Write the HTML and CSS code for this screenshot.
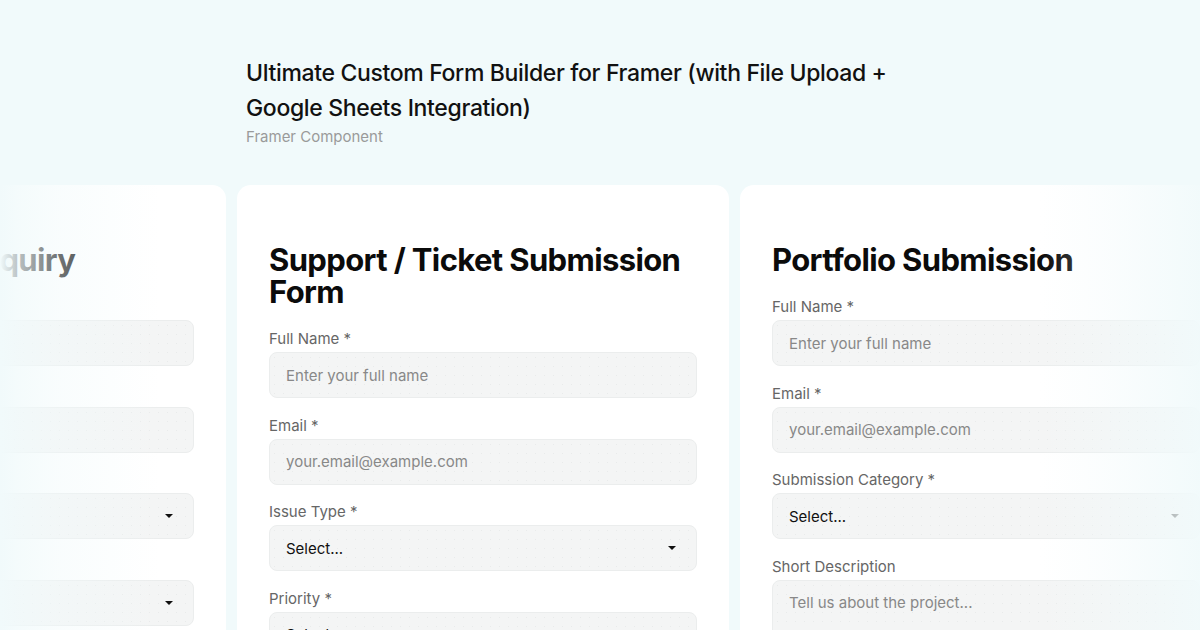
FILE: index.html
```html
<!DOCTYPE html>
<html lang="en">
<head>
<meta charset="utf-8">
<title>Ultimate Custom Form Builder for Framer</title>
<link rel="stylesheet" href="styles.css">
</head>
<body>
<div class="page">
  <header class="intro">
    <h1 class="intro-title">Ultimate Custom Form Builder for Framer (with File Upload + Google Sheets Integration)</h1>
    <p class="intro-sub">Framer Component</p>
  </header>

  <div class="cards">
    <section class="card">
      <h2 class="card-title">General Sales Inquiry</h2>
      <div class="field"><label class="label">Full Name *</label><div class="input placeholder">Enter your full name</div></div>
      <div class="field"><label class="label">Email *</label><div class="input placeholder">your.email@example.com</div></div>
      <div class="field"><label class="label">Inquiry Type *</label><div class="input select">Select...<span class="caret"></span></div></div>
      <div class="field"><label class="label">Budget *</label><div class="input select">Select...<span class="caret"></span></div></div>
    </section>

    <section class="card">
      <h2 class="card-title">Support / Ticket Submission Form</h2>
      <div class="field"><label class="label">Full Name *</label><div class="input placeholder">Enter your full name</div></div>
      <div class="field"><label class="label">Email *</label><div class="input placeholder">your.email@example.com</div></div>
      <div class="field"><label class="label">Issue Type *</label><div class="input select">Select...<span class="caret"></span></div></div>
      <div class="field"><label class="label">Priority *</label><div class="input select">Select...<span class="caret"></span></div></div>
    </section>

    <section class="card">
      <h2 class="card-title">Portfolio Submission</h2>
      <div class="field"><label class="label">Full Name *</label><div class="input placeholder">Enter your full name</div></div>
      <div class="field"><label class="label">Email *</label><div class="input placeholder">your.email@example.com</div></div>
      <div class="field"><label class="label">Submission Category *</label><div class="input select">Select...<span class="caret"></span></div></div>
      <div class="field"><label class="label">Short Description</label><div class="input textarea placeholder">Tell us about the project...</div></div>
    </section>
  </div>

  <div class="fade fade-left"></div>
  <div class="fade fade-right"></div>
</div>
</body>
</html>
```

FILE: styles.css
```css
* { box-sizing: border-box; }

html, body {
  margin: 0;
  padding: 0;
}

body {
  background: #f1fafb;
  font-family: Inter, "Noto Sans", sans-serif;
  color: #111;
}

.page {
  position: relative;
  width: 1200px;
  height: 630px;
  overflow: hidden;
}

.intro {
  padding: 56px 0 0 246px;
}

.intro-title {
  margin: 0;
  width: 660px;
  font-family: Inter, sans-serif;
  font-size: 23px;
  font-weight: 500;
  line-height: 35px;
  letter-spacing: -0.015em;
  color: #111;
}

.intro-sub {
  margin: 1px 0 0;
  font-size: 15px;
  line-height: 20px;
  color: #9a9a9a;
}

.cards {
  display: flex;
  gap: 11px;
  margin-top: 38px;
  margin-left: -266px;
}

.card {
  flex: 0 0 492px;
  height: 560px;
  background: #fff;
  border-radius: 14px;
  padding: 59px 32px 0;
  display: flex;
  flex-direction: column;
  gap: 18.5px;
}

.card-title {
  margin: 0 0 3.5px;
  font-size: 31px;
  font-weight: 700;
  line-height: 32px;
  letter-spacing: -0.02em;
  color: #0b0b0b;
}

.field {
  display: flex;
  flex-direction: column;
  gap: 4px;
}

.label {
  font-size: 15px;
  line-height: 18px;
  color: #666;
}

.input {
  position: relative;
  height: 46px;
  display: flex;
  align-items: center;
  padding: 0 16px;
  border: 1px solid #ebeded;
  border-radius: 8px;
  background-color: #f4f5f5;
  background-image: radial-gradient(circle, #e9ebeb 0.7px, transparent 1px);
  background-size: 9px 9px;
  font-size: 15px;
  color: #111;
}

.placeholder {
  color: #888;
}

.textarea {
  height: 90px;
  align-items: flex-start;
  padding-top: 12px;
}

.caret {
  position: absolute;
  right: 20px;
  top: 50%;
  margin-top: -2px;
  width: 0;
  height: 0;
  border-left: 4px solid transparent;
  border-right: 4px solid transparent;
  border-top: 4px solid #111;
}

.fade {
  position: absolute;
  top: 0;
  bottom: 0;
  pointer-events: none;
}

.fade-left {
  left: 0;
  width: 160px;
  background: linear-gradient(to right, rgba(241,250,251,1) 0%, rgba(241,250,251,0.75) 12%, rgba(241,250,251,0.45) 35%, rgba(241,250,251,0) 100%);
}

.fade-right {
  right: 0;
  width: 160px;
  background: linear-gradient(to left, rgba(241,250,251,0.95) 0%, rgba(241,250,251,0.7) 20%, rgba(241,250,251,0.3) 60%, rgba(241,250,251,0) 100%);
}
```
